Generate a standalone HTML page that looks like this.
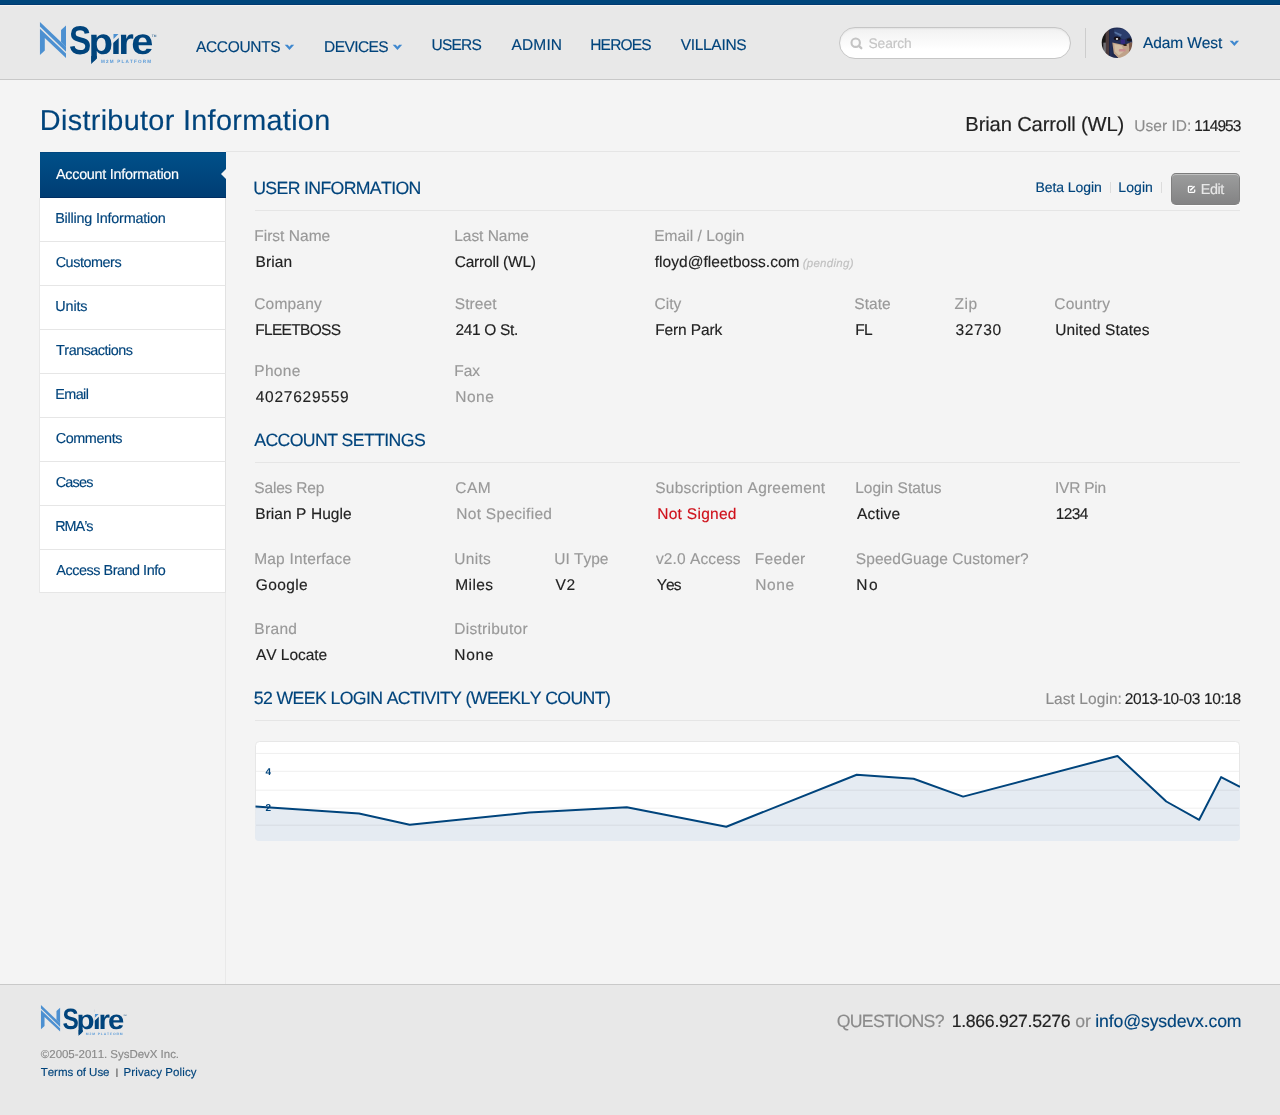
<!DOCTYPE html>
<html lang="en">
<head>
<meta charset="utf-8">
<title>Distributor Information</title>
<style>
html,body{margin:0;padding:0;}
body{background:#f4f4f4;font-family:"Liberation Sans",Arial,sans-serif;color:#222;font-kerning:none;text-rendering:geometricPrecision;}
#page{position:relative;width:1280px;height:1115px;overflow:hidden;background:#f4f4f4;will-change:transform;}
.t{position:absolute;white-space:nowrap;line-height:1;margin:0;padding:0;font-weight:normal;text-decoration:none;-webkit-text-stroke:0.15px currentColor;}
a{text-decoration:none;}
#topbar{position:absolute;left:0;top:0;width:1280px;height:5px;box-sizing:border-box;background:#00467c;border-bottom:1px solid #003a72;}
#header{position:absolute;left:0;top:5px;width:1280px;height:74px;background:#e8e8e8;border-top:1px solid #f5f2f0;box-sizing:border-box;border-bottom:0;}
#hline{position:absolute;left:0;top:79px;width:1280px;height:1px;background:#c8c8c8;}
#search{position:absolute;left:839px;top:27px;width:232px;height:32px;box-sizing:border-box;border:1px solid #c6c6c6;border-radius:16px;background:linear-gradient(#f1f1f1,#fff 72%);box-shadow:inset 0 1px 2px rgba(0,0,0,.06);}
.vdiv{position:absolute;width:1px;background:#cdcdcd;}
.hr{position:absolute;height:1px;background:#e5e5e5;}
#side{position:absolute;left:40px;top:152px;width:186px;margin:0;padding:0;list-style:none;}
#side li{position:absolute;left:0;width:185px;height:43px;background:#fff;border-bottom:1px solid #e6e6e6;border-right:1px solid #e2e2e2;}
#side li.on{width:186px;height:46px;box-sizing:border-box;border:0;border-bottom:1px solid #002e63;border-top:1px solid #00467f;background:linear-gradient(#005089,#003d73);}
#side li:last-child{height:42px;}
#sideleft{position:absolute;left:39px;top:198px;width:1px;height:395px;background:#e8e8e8;}
#side li.on:after{content:"";position:absolute;right:0;top:16px;border:5px solid transparent;border-right-color:#f4f4f4;border-left-width:0;}
#sideline{position:absolute;left:225px;top:593px;width:1px;height:391px;background:#e9e9e9;}
#footer{position:absolute;left:0;top:984px;width:1280px;height:131px;background:#e8e8e8;border-top:1px solid #c9c9c9;box-sizing:border-box;}
#edit{position:absolute;left:1171px;top:173px;width:69px;height:32px;box-sizing:border-box;border:1px solid #808080;border-top-color:#7c7c7c;border-radius:5px;background:linear-gradient(#9c9d9d,#838384);box-shadow:inset 0 1px 0 rgba(255,255,255,.36),0 1px 0 rgba(255,255,255,.8);}
</style>
</head>
<body>
<div id="page">

<div id="topbar"></div>
<header><div id="header"></div><div id="hline"></div>
<svg class="logo" style="position:absolute;left:0;top:0" width="180" height="78" viewBox="0 0 180 78"><g fill="#4c90d1">
<polygon points="39.95,21.95 66,46.8 66,51.7 39.95,26.5"/>
<polygon points="39.95,28.7 66,53.6 66,58.1 44.8,38.1 44.8,50.4 39.95,54.9"/>
<polygon points="61.05,30.1 66,25.5 66,47 61.05,42"/>
</g>
<text y="54" font-family="Liberation Sans, Arial, sans-serif" font-weight="bold" font-size="40" fill="#00447c"><tspan x="69.1" textLength="22.2" lengthAdjust="spacingAndGlyphs">S</tspan><tspan x="88.4" textLength="24.6" lengthAdjust="spacingAndGlyphs" font-size="36.6">p</tspan><tspan x="110.5" textLength="11" lengthAdjust="spacingAndGlyphs" font-size="36.6">i</tspan><tspan x="118.2" textLength="15.6" lengthAdjust="spacingAndGlyphs" font-size="36.6">r</tspan><tspan x="131.3" textLength="22.2" lengthAdjust="spacingAndGlyphs" font-size="36.6">e</tspan></text>
<polygon fill="#e8e8e8" points="112.5,20 119.8,20 119.8,36.9 112.5,43.6"/>
<polygon fill="#4a8fd0" points="113.5,34.1 118.5,34.1 113.5,38.9"/>
<polygon fill="#00447c" points="91.2,56 96.8,56 96.8,58.6 91.2,64.2"/>
<polygon fill="#e8e8e8" points="97.7,57.7 97.7,66.5 88.9,66.5"/>
<text x="101" y="62.8" font-family="Liberation Sans, Arial, sans-serif" font-weight="bold" font-size="4.6" fill="#5b9bd8" textLength="50" lengthAdjust="spacing">M2M PLATFORM</text>
<text x="151.8" y="36.6" font-family="Liberation Sans, Arial, sans-serif" font-size="3.2" fill="#00447c">TM</text></svg>
<nav>
<a class="t" style="left:195.97px;top:40px;font-size:15.50px;letter-spacing:-0.319px;color:#00447c;">ACCOUNTS</a>
<a class="t" style="left:324.03px;top:40px;font-size:15.50px;letter-spacing:-0.561px;color:#00447c;">DEVICES</a>
<a class="t" style="left:431.60px;top:38px;font-size:15.50px;letter-spacing:-0.799px;color:#00447c;">USERS</a>
<a class="t" style="left:511.57px;top:38px;font-size:15.50px;letter-spacing:0.138px;color:#00447c;">ADMIN</a>
<a class="t" style="left:590.23px;top:38px;font-size:15.50px;letter-spacing:-0.795px;color:#00447c;">HEROES</a>
<a class="t" style="left:680.73px;top:38px;font-size:15.50px;letter-spacing:-0.312px;color:#00447c;">VILLAINS</a>
</nav>
<svg style="position:absolute;left:0;top:0;overflow:visible" width="1" height="1"><polygon fill="#3f88cf" points="284.70,44.80 287.74,44.80 289.45,46.71 291.16,44.80 294.20,44.80 289.45,50.10"/></svg>
<svg style="position:absolute;left:0;top:0;overflow:visible" width="1" height="1"><polygon fill="#3f88cf" points="392.70,44.80 395.74,44.80 397.45,46.71 399.16,44.80 402.20,44.80 397.45,50.10"/></svg>
<div id="search"></div>
<svg style="position:absolute;left:849px;top:36px" width="15" height="15" viewBox="0 0 15 15"><circle cx="6.7" cy="6.7" r="4.2" fill="none" stroke="#c4c4c4" stroke-width="2.1"/><line x1="9.9" y1="9.9" x2="12.3" y2="12.2" stroke="#c4c4c4" stroke-width="2.3" stroke-linecap="round"/></svg>
<span class="t" style="left:868.47px;top:37px;font-size:13.80px;letter-spacing:-0.100px;color:#c6c6c6;">Search</span>
<div class="vdiv" style="left:1085px;top:28px;height:30px"></div>
<svg style="position:absolute;left:1101px;top:27px" width="32" height="32" viewBox="0 0 32 32">
<defs><clipPath id="av"><circle cx="16" cy="15.8" r="15.3"/></clipPath><filter id="avb" x="-10%" y="-10%" width="120%" height="120%"><feGaussianBlur stdDeviation="0.5"/></filter></defs>
<g clip-path="url(#av)"><g filter="url(#avb)" transform="translate(0.8,0.6)">
<rect x="-2" y="-2" width="36" height="36" fill="#1d2545"/>
<rect x="-2" y="-2" width="10" height="36" fill="#141312"/>
<rect x="3.8" y="2" width="3.4" height="30" fill="#4b3a3c"/>
<rect x="1.5" y="15" width="2.6" height="10" fill="#6d6d72"/>
<path d="M7.5 -2 L34 -2 L34 16 L29 15 L22 17.5 L10.5 14.8 L11 32 L7.5 32 Z" fill="#222e56"/>
<path d="M12 2 L26 1 L29 9 L22 12 L13 8 Z" fill="#2c3e6c"/>
<path d="M13 4 L20 7 L19 9 L12.5 5.5 Z" fill="#5470a0"/>
<path d="M10.5 14.8 L22 17.5 L29 15 L32 15.5 L32 24 L24 31 L17 31 L12 26 Z" fill="#bfa289"/>
<path d="M12.5 16.5 L20 18 L22 24 L17 28 L13 24 Z" fill="#d2bea4"/>
<path d="M27 15.5 L32 15 L32 26 L26 30 L27.5 22 Z" fill="#7b5a49"/>
<path d="M11 26 L17 31 L24 31 L20 34 L8 34 Z" fill="#20294e"/>
<ellipse cx="15.4" cy="10.9" rx="3.4" ry="1.9" fill="#121018"/>
<ellipse cx="15.2" cy="11.3" rx="1.2" ry="0.9" fill="#f0ecea"/>
<ellipse cx="27.5" cy="12.2" rx="2.6" ry="1.6" fill="#16141c"/>
<rect x="19" y="12" width="4.2" height="4.2" fill="#342c80"/>
<ellipse cx="23.3" cy="17.4" rx="1.9" ry="1" fill="#2a1a12"/>
<rect x="17" y="21.3" width="6.8" height="2.7" rx="1.2" fill="#c98b8f"/>
</g></g></svg>
<a class="t" style="left:1142.97px;top:36px;font-size:15.50px;letter-spacing:-0.095px;color:#00447c;">Adam West</a>
<svg style="position:absolute;left:0;top:0;overflow:visible" width="1" height="1"><polygon fill="#3f88cf" points="1229.60,40.80 1232.64,40.80 1234.35,42.71 1236.06,40.80 1239.10,40.80 1234.35,46.10"/></svg>
</header>
<h1 class="t" style="left:39.84px;top:107px;font-size:28.80px;letter-spacing:0.324px;color:#00447c;">Distributor Information</h1>
<span class="t" style="left:965.34px;top:115px;font-size:20.20px;letter-spacing:-0.148px;color:#222;">Brian Carroll (WL)</span>
<span class="t" style="left:1134.30px;top:119px;font-size:15.50px;letter-spacing:0.039px;color:#8c8c8c;">User ID:</span>
<span class="t" style="left:1194.32px;top:119px;font-size:15.50px;letter-spacing:-0.932px;color:#222;">114953</span>
<div class="hr" style="left:226px;top:151px;width:1014px"></div>
<aside><ul id="side">
<li class="on" style="top:0"><a class="t" style="left:15.97px;top:15px;font-size:14.40px;letter-spacing:-0.272px;color:#fff;">Account Information</a></li>
<li style="top:46px"><a class="t" style="left:15.22px;top:14px;font-size:14.40px;letter-spacing:-0.208px;color:#00447c;">Billing Information</a></li>
<li style="top:90px"><a class="t" style="left:15.67px;top:14px;font-size:14.40px;letter-spacing:-0.446px;color:#00447c;">Customers</a></li>
<li style="top:134px"><a class="t" style="left:15.29px;top:14px;font-size:14.40px;letter-spacing:-0.144px;color:#00447c;">Units</a></li>
<li style="top:178px"><a class="t" style="left:16.08px;top:14px;font-size:14.40px;letter-spacing:-0.499px;color:#00447c;">Transactions</a></li>
<li style="top:222px"><a class="t" style="left:15.22px;top:14px;font-size:14.40px;letter-spacing:-0.566px;color:#00447c;">Email</a></li>
<li style="top:266px"><a class="t" style="left:15.67px;top:14px;font-size:14.40px;letter-spacing:-0.395px;color:#00447c;">Comments</a></li>
<li style="top:310px"><a class="t" style="left:15.67px;top:14px;font-size:14.40px;letter-spacing:-0.741px;color:#00447c;">Cases</a></li>
<li style="top:354px"><a class="t" style="left:15.22px;top:14px;font-size:14.40px;letter-spacing:-1.024px;color:#00447c;">RMA’s</a></li>
<li style="top:398px"><a class="t" style="left:16.37px;top:14px;font-size:14.40px;letter-spacing:-0.464px;color:#00447c;">Access Brand Info</a></li>
</ul>
<div id="sideline"></div><div id="sideleft"></div></aside>
<main>
<h2 class="t" style="left:253.23px;top:180px;font-size:17.70px;letter-spacing:-0.652px;color:#00447c;">USER INFORMATION</h2>
<div class="hr" style="left:255px;top:210px;width:985px"></div>
<a class="t" style="left:1035.45px;top:180px;font-size:14.00px;letter-spacing:-0.076px;color:#00447c;">Beta Login</a>
<div class="vdiv" style="left:1109.5px;top:182px;height:11px;background:#dcdcdc"></div>
<a class="t" style="left:1118.35px;top:180px;font-size:14.00px;letter-spacing:0.076px;color:#00447c;">Login</a>
<div class="vdiv" style="left:1161px;top:182px;height:11px;background:#dcdcdc"></div>
<div id="edit"></div>
<svg style="position:absolute;left:1186px;top:184px" width="12" height="11" viewBox="0 0 12 11"><path d="M6.6 2.4H3.2Q2.4 2.4 2.4 3.2V7.6Q2.4 8.4 3.2 8.4H7.9Q8.7 8.4 8.7 7.6V5.4" fill="none" stroke="#fff" stroke-width="1.25"/><path d="M4.2 6.4L8.6 2.2" fill="none" stroke="#fff" stroke-width="1.5"/></svg>
<span class="t" style="left:1200.82px;top:183px;font-size:14.40px;letter-spacing:-0.442px;color:#e8e8e8;">Edit</span>
<span class="t l" style="left:254.23px;top:229px;font-size:15.50px;letter-spacing:0.020px;color:#999;">First Name</span>
<span class="t v" style="left:255.53px;top:255px;font-size:15.50px;letter-spacing:0.123px;color:#222;">Brian</span>
<span class="t l" style="left:454.23px;top:229px;font-size:15.50px;letter-spacing:-0.036px;color:#999;">Last Name</span>
<span class="t v" style="left:454.71px;top:255px;font-size:15.50px;letter-spacing:-0.207px;color:#222;">Carroll (WL)</span>
<span class="t l" style="left:654.23px;top:229px;font-size:15.50px;letter-spacing:0.056px;color:#999;">Email / Login</span>
<span class="t v" style="left:654.78px;top:255px;font-size:15.50px;letter-spacing:0.036px;color:#222;">floyd@fleetboss.com</span>
<span class="t" style="left:802.66px;top:259px;font-size:11.50px;letter-spacing:0.279px;color:#c0c0c0;font-style:italic;">(pending)</span>
<span class="t l" style="left:254.21px;top:297px;font-size:15.50px;letter-spacing:0.197px;color:#999;">Company</span>
<span class="t v" style="left:255.23px;top:323px;font-size:15.50px;letter-spacing:-0.678px;color:#222;">FLEETBOSS</span>
<span class="t l" style="left:454.70px;top:297px;font-size:15.50px;letter-spacing:0.113px;color:#999;">Street</span>
<span class="t v" style="left:455.42px;top:323px;font-size:15.50px;letter-spacing:-0.336px;color:#222;">241 O St.</span>
<span class="t l" style="left:654.51px;top:297px;font-size:15.50px;letter-spacing:0.041px;color:#999;">City</span>
<span class="t v" style="left:655.23px;top:323px;font-size:15.50px;letter-spacing:-0.125px;color:#222;">Fern Park</span>
<span class="t l" style="left:854.30px;top:297px;font-size:15.50px;letter-spacing:0.050px;color:#999;">State</span>
<span class="t v" style="left:855.23px;top:323px;font-size:15.50px;letter-spacing:-0.802px;color:#222;">FL</span>
<span class="t l" style="left:954.51px;top:297px;font-size:15.50px;letter-spacing:0.555px;color:#999;">Zip</span>
<span class="t v" style="left:955.41px;top:323px;font-size:15.50px;letter-spacing:0.648px;color:#222;">32730</span>
<span class="t l" style="left:1054.21px;top:297px;font-size:15.50px;letter-spacing:0.257px;color:#999;">Country</span>
<span class="t v" style="left:1055.30px;top:323px;font-size:15.50px;letter-spacing:0.100px;color:#222;">United States</span>
<span class="t l" style="left:254.23px;top:364px;font-size:15.50px;letter-spacing:0.335px;color:#999;">Phone</span>
<span class="t v" style="left:255.64px;top:390px;font-size:15.50px;letter-spacing:0.765px;color:#222;">4027629559</span>
<span class="t l" style="left:454.23px;top:364px;font-size:15.50px;letter-spacing:-0.050px;color:#999;">Fax</span>
<span class="t v" style="left:455.23px;top:390px;font-size:15.50px;letter-spacing:0.535px;color:#999;">None</span>
<h2 class="t" style="left:254.27px;top:432px;font-size:17.70px;letter-spacing:-0.626px;color:#00447c;">ACCOUNT SETTINGS</h2>
<div class="hr" style="left:255px;top:462px;width:985px"></div>
<span class="t l" style="left:254.30px;top:481px;font-size:15.50px;letter-spacing:-0.182px;color:#999;">Sales Rep</span>
<span class="t v" style="left:255.23px;top:507px;font-size:15.50px;letter-spacing:0.069px;color:#222;">Brian P Hugle</span>
<span class="t l" style="left:455.21px;top:481px;font-size:15.50px;letter-spacing:0.557px;color:#999;">CAM</span>
<span class="t v" style="left:456.23px;top:507px;font-size:15.50px;letter-spacing:0.298px;color:#999;">Not Specified</span>
<span class="t l" style="left:655.30px;top:481px;font-size:15.50px;letter-spacing:0.209px;color:#999;">Subscription Agreement</span>
<span class="t v" style="left:657.23px;top:507px;font-size:15.50px;letter-spacing:0.287px;color:#cf111b;">Not Signed</span>
<span class="t l" style="left:855.23px;top:481px;font-size:15.50px;letter-spacing:0.014px;color:#999;">Login Status</span>
<span class="t v" style="left:856.97px;top:507px;font-size:15.50px;letter-spacing:0.202px;color:#222;">Active</span>
<span class="t l" style="left:1055.07px;top:481px;font-size:15.50px;letter-spacing:-0.268px;color:#999;">IVR Pin</span>
<span class="t v" style="left:1055.82px;top:507px;font-size:15.50px;letter-spacing:-0.616px;color:#222;">1234</span>
<span class="t l" style="left:254.23px;top:552px;font-size:15.50px;letter-spacing:0.182px;color:#999;">Map Interface</span>
<span class="t v" style="left:255.72px;top:578px;font-size:15.50px;letter-spacing:0.397px;color:#222;">Google</span>
<span class="t l" style="left:454.30px;top:552px;font-size:15.50px;letter-spacing:0.310px;color:#999;">Units</span>
<span class="t v" style="left:455.33px;top:578px;font-size:15.50px;letter-spacing:0.366px;color:#222;">Miles</span>
<span class="t l" style="left:554.30px;top:552px;font-size:15.50px;letter-spacing:-0.030px;color:#999;">UI Type</span>
<span class="t v" style="left:555.43px;top:578px;font-size:15.50px;letter-spacing:0.789px;color:#222;">V2</span>
<span class="t l" style="left:655.95px;top:552px;font-size:15.50px;letter-spacing:0.105px;color:#999;">v2.0 Access</span>
<span class="t v" style="left:656.66px;top:578px;font-size:15.50px;letter-spacing:-0.904px;color:#222;">Yes</span>
<span class="t l" style="left:754.73px;top:552px;font-size:15.50px;letter-spacing:0.284px;color:#999;">Feeder</span>
<span class="t v" style="left:755.23px;top:578px;font-size:15.50px;letter-spacing:0.635px;color:#999;">None</span>
<span class="t l" style="left:855.80px;top:552px;font-size:15.50px;letter-spacing:0.069px;color:#999;">SpeedGuage Customer?</span>
<span class="t v" style="left:856.23px;top:578px;font-size:15.50px;letter-spacing:1.608px;color:#222;">No</span>
<span class="t l" style="left:254.23px;top:622px;font-size:15.50px;letter-spacing:0.352px;color:#999;">Brand</span>
<span class="t v" style="left:255.97px;top:648px;font-size:15.50px;letter-spacing:-0.038px;color:#222;">AV Locate</span>
<span class="t l" style="left:454.23px;top:622px;font-size:15.50px;letter-spacing:0.280px;color:#999;">Distributor</span>
<span class="t v" style="left:454.23px;top:648px;font-size:15.50px;letter-spacing:0.735px;color:#222;">None</span>
<h2 class="t" style="left:253.79px;top:690px;font-size:17.70px;letter-spacing:-0.620px;color:#00447c;">52 WEEK LOGIN ACTIVITY (WEEKLY COUNT)</h2>
<span class="t" style="left:1045.43px;top:692px;font-size:15.50px;letter-spacing:0.065px;color:#8c8c8c;">Last Login:</span>
<span class="t" style="left:1124.72px;top:692px;font-size:15.50px;letter-spacing:-0.395px;color:#222;">2013-10-03 10:18</span>
<div class="hr" style="left:255px;top:720px;width:985px"></div>
<svg id="chart" style="position:absolute;left:255px;top:741px" width="985" height="100" viewBox="0 0 985 100">
<defs><clipPath id="cc"><rect x="0" y="0" width="985" height="100" rx="4" ry="4"/></clipPath></defs>
<rect x="0.5" y="0.5" width="984" height="99" rx="4" ry="4" fill="#fff" stroke="#e7e7e7"/>
<g clip-path="url(#cc)">
<polygon points="0.5,65.6 104.0,72.6 154.7,83.7 274.3,71.5 371.8,66.2 471.3,85.7 601.7,33.7 658.6,37.8 708.1,55.6 862.5,15.0 911.3,60.5 944.2,78.8 966.1,36.1 985.0,45.9 985,100 0,100" fill="#e5ebf2"/>
<line x1="1" x2="984" y1="12.4" y2="12.4" stroke="#000" stroke-opacity="0.065" stroke-width="1"/>
<line x1="1" x2="984" y1="30.3" y2="30.3" stroke="#000" stroke-opacity="0.065" stroke-width="1"/>
<line x1="1" x2="984" y1="49.2" y2="49.2" stroke="#000" stroke-opacity="0.065" stroke-width="1"/>
<line x1="1" x2="984" y1="67.2" y2="67.2" stroke="#000" stroke-opacity="0.065" stroke-width="1"/>
<line x1="1" x2="984" y1="84.2" y2="84.2" stroke="#000" stroke-opacity="0.065" stroke-width="1"/>
<polyline points="0.5,65.6 104.0,72.6 154.7,83.7 274.3,71.5 371.8,66.2 471.3,85.7 601.7,33.7 658.6,37.8 708.1,55.6 862.5,15.0 911.3,60.5 944.2,78.8 966.1,36.1 985.0,45.9" fill="none" stroke="#00447c" stroke-width="2" stroke-linejoin="round"/>
</g>
<text x="10.6" y="34" font-family="Liberation Sans, Arial, sans-serif" font-weight="bold" font-size="10" fill="#00447c">4</text>
<text x="10.6" y="70.2" font-family="Liberation Sans, Arial, sans-serif" font-weight="bold" font-size="10" fill="#00447c">2</text>
</svg>
</main>
<footer><div id="footer"></div>
<svg class="logo" style="position:absolute;left:0;top:990px" width="140" height="50" viewBox="0 0 140 50"><g transform="translate(11.6,-1.1) scale(0.735)"><g fill="#4c90d1">
<polygon points="39.95,21.95 66,46.8 66,51.7 39.95,26.5"/>
<polygon points="39.95,28.7 66,53.6 66,58.1 44.8,38.1 44.8,50.4 39.95,54.9"/>
<polygon points="61.05,30.1 66,25.5 66,47 61.05,42"/>
</g>
<text y="54" font-family="Liberation Sans, Arial, sans-serif" font-weight="bold" font-size="40" fill="#00447c"><tspan x="69.1" textLength="22.2" lengthAdjust="spacingAndGlyphs">S</tspan><tspan x="88.4" textLength="24.6" lengthAdjust="spacingAndGlyphs" font-size="36.6">p</tspan><tspan x="110.5" textLength="11" lengthAdjust="spacingAndGlyphs" font-size="36.6">i</tspan><tspan x="118.2" textLength="15.6" lengthAdjust="spacingAndGlyphs" font-size="36.6">r</tspan><tspan x="131.3" textLength="22.2" lengthAdjust="spacingAndGlyphs" font-size="36.6">e</tspan></text>
<polygon fill="#e8e8e8" points="112.5,20 119.8,20 119.8,36.9 112.5,43.6"/>
<polygon fill="#4a8fd0" points="113.5,34.1 118.5,34.1 113.5,38.9"/>
<polygon fill="#00447c" points="91.2,56 96.8,56 96.8,58.6 91.2,64.2"/>
<polygon fill="#e8e8e8" points="97.7,57.7 97.7,66.5 88.9,66.5"/>
<text x="101" y="62.8" font-family="Liberation Sans, Arial, sans-serif" font-weight="bold" font-size="4.6" fill="#5b9bd8" textLength="50" lengthAdjust="spacing">M2M PLATFORM</text>
<text x="151.8" y="36.6" font-family="Liberation Sans, Arial, sans-serif" font-size="3.2" fill="#00447c">TM</text></g></svg>
<span class="t" style="left:40.83px;top:1050px;font-size:11.50px;letter-spacing:-0.029px;color:#8a8a8a;">©2005-2011. SysDevX Inc.</span>
<a class="t" style="left:40.74px;top:1068px;font-size:11.50px;letter-spacing:-0.022px;color:#00447c;">Terms of Use</a>
<span class="t" style="left:115.54px;top:1068px;font-size:10.00px;color:#777;font-weight:bold;transform:scaleY(.88);transform-origin:50% 70%;">|</span>
<a class="t" style="left:123.56px;top:1068px;font-size:11.50px;letter-spacing:0.107px;color:#00447c;">Privacy Policy</a>
<span class="t" style="left:836.66px;top:1013px;font-size:17.70px;letter-spacing:-0.677px;color:#8a8a8a;">QUESTIONS?</span>
<span class="t" style="left:951.65px;top:1013px;font-size:17.70px;letter-spacing:-0.301px;color:#222;">1.866.927.5276</span>
<span class="t" style="left:1075.26px;top:1013px;font-size:17.70px;letter-spacing:-0.201px;color:#8a8a8a;">or</span>
<a class="t" style="left:1095.32px;top:1013px;font-size:17.70px;letter-spacing:-0.163px;color:#00447c;">info@sysdevx.com</a>
</footer>
</div>
</body>
</html>
